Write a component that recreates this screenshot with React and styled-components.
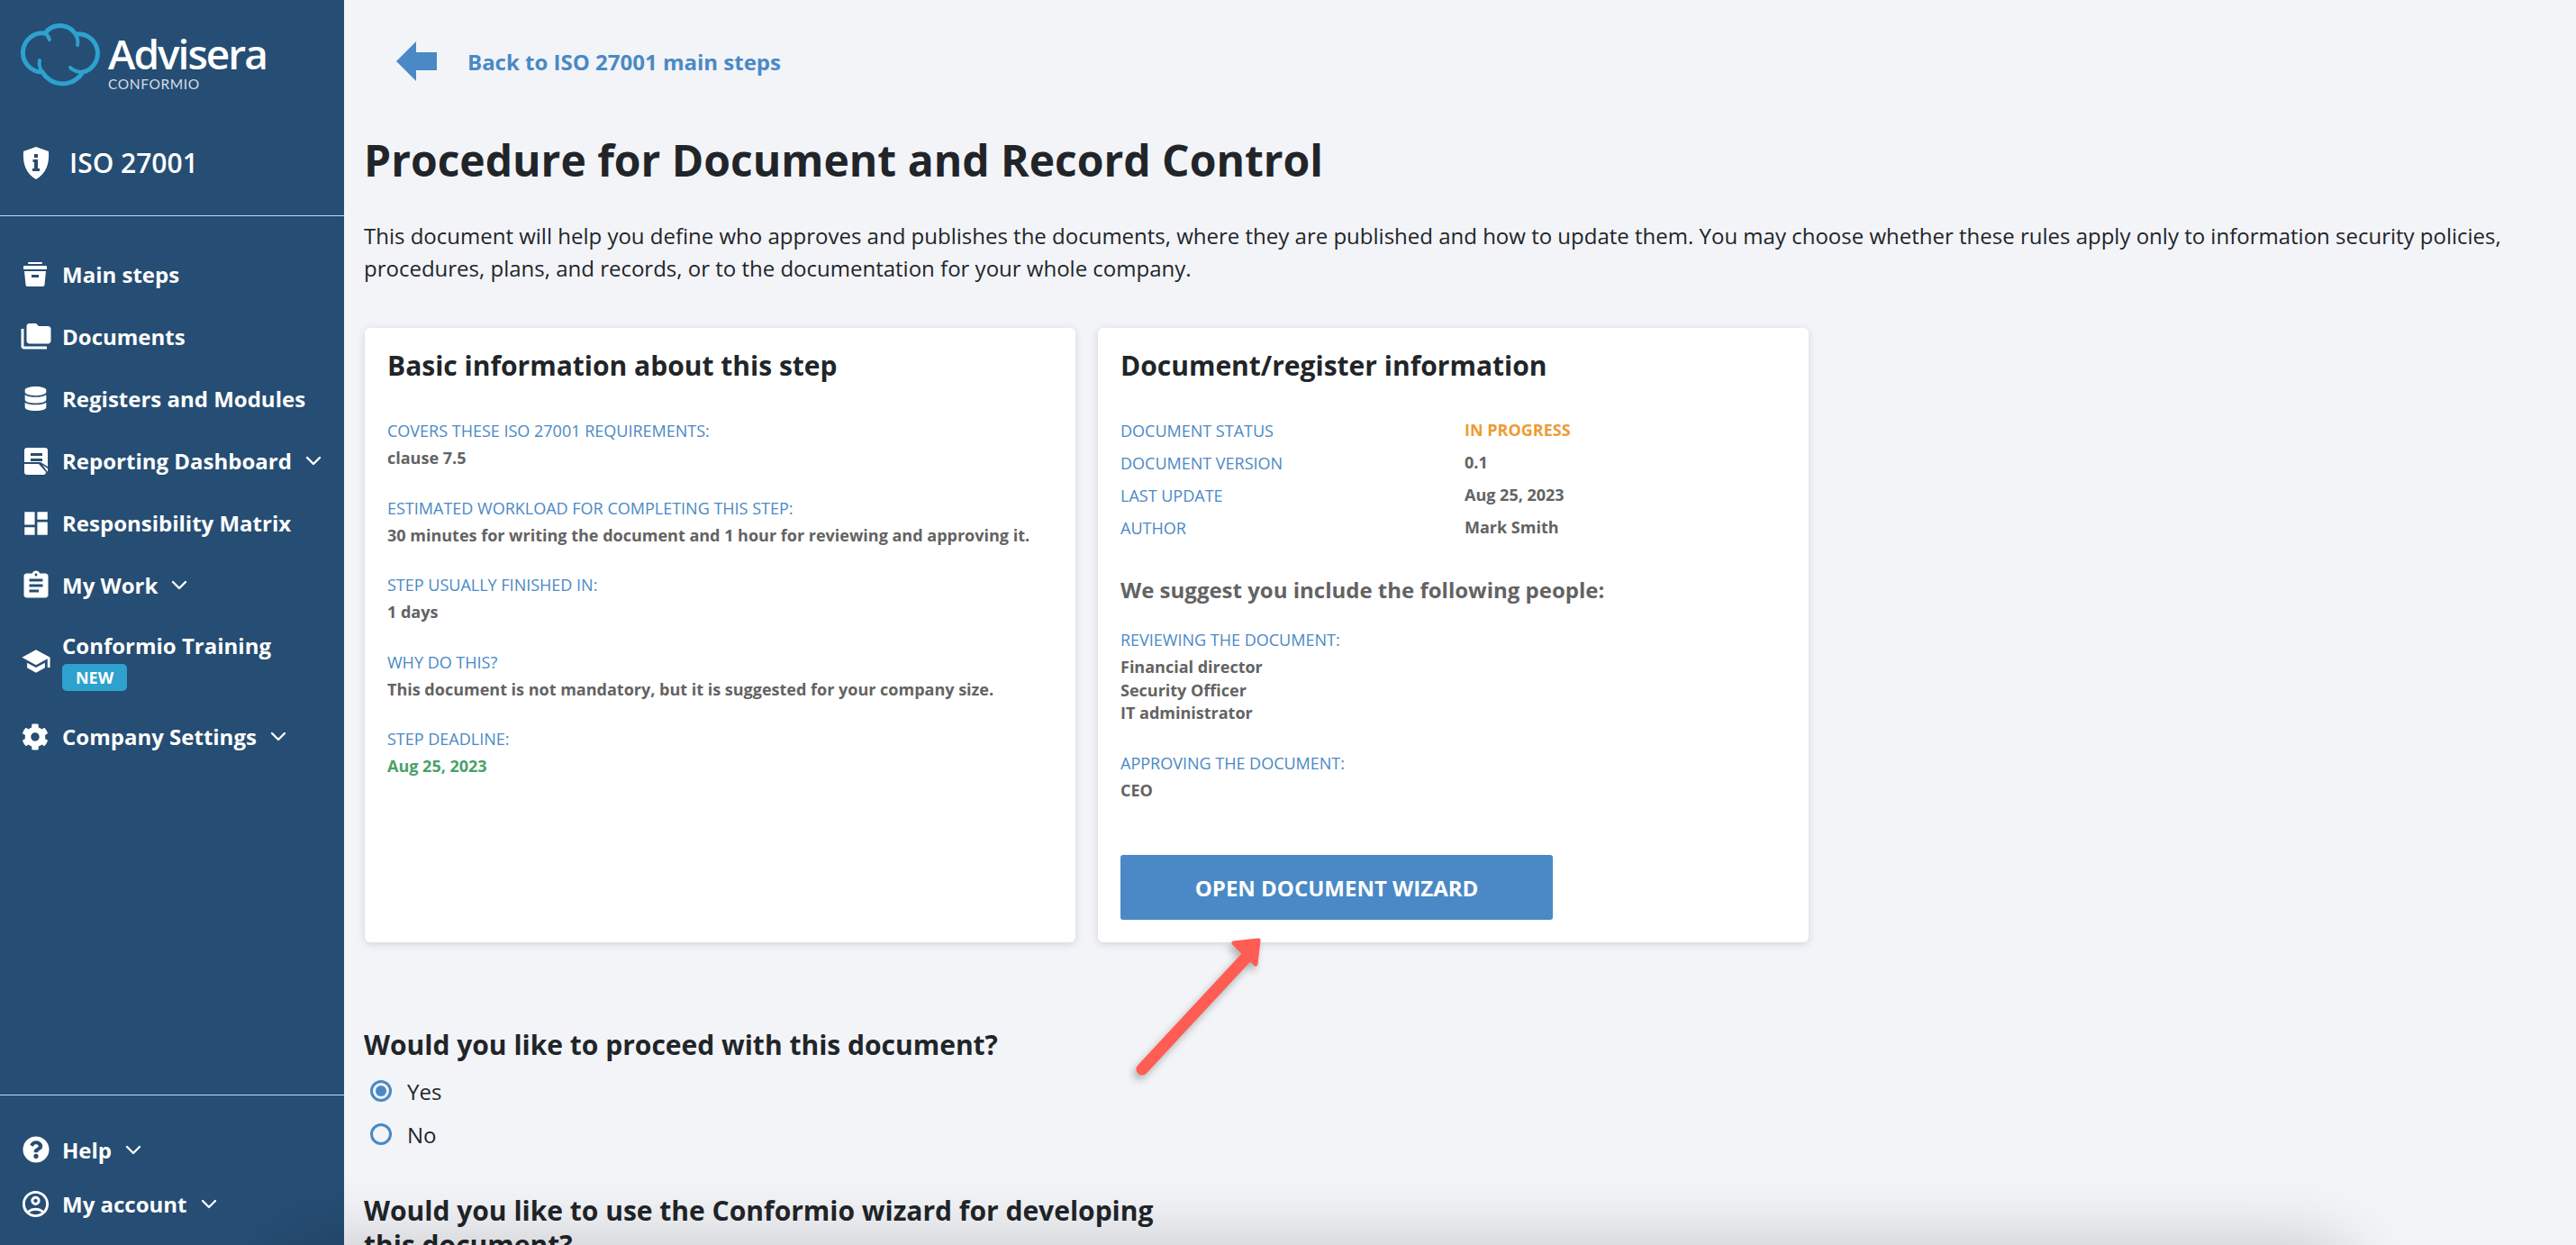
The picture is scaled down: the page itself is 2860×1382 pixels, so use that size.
import React from 'react';
import styled, { createGlobalStyle } from 'styled-components';
import { FaDatabase, FaCog, FaQuestionCircle } from 'react-icons/fa';
import { MdFolderCopy, MdDashboard, MdAssignment, MdSchool, MdOutlineAccountCircle } from 'react-icons/md';

const GlobalStyle = createGlobalStyle`
  html, body { margin: 0; padding: 0; height: 100%; overflow: hidden; }
  body { font-family: "Open Sans", "Liberation Sans", sans-serif; background: #f3f4f8; color: #212529; }
  * { box-sizing: border-box; }
`;

const Page = styled.div`
  display: flex;
  width: 2860px;
  height: 1382px;
  overflow: hidden;
  position: relative;
`;

const Sidebar = styled.aside`
  width: 382px;
  flex: none;
  height: 100%;
  background: #264d73;
  color: #fff;
  display: flex;
  flex-direction: column;
`;

const Logo = styled.div`
  height: 122px;
  padding: 26px 0 0 22px;
  display: flex;
  gap: 8px;
`;

const LogoWords = styled.div`
  display: flex;
  flex-direction: column;
  padding-top: 10px;
`;

const LogoName = styled.div`
  font-size: 46px;
  line-height: 46px;
  font-weight: 600;
  letter-spacing: -2px;
`;

const LogoSub = styled.div`
  font-size: 15.5px;
  line-height: 16px;
  margin-top: 3px;
  letter-spacing: 0.6px;
  color: #d5dde6;
  font-family: "Lato", sans-serif;
`;

const Product = styled.div`
  height: 118px;
  padding-left: 25px;
  border-bottom: 1px solid #b9def7;
  display: flex;
  align-items: center;
  gap: 22px;
  font-size: 30px;
  font-weight: 600;
`;

const Nav = styled.nav`
  flex: 1;
  padding-top: 30px;
  display: flex;
  flex-direction: column;
`;

const NavItem = styled.div`
  height: ${(p) => (p.$tall ? '99px' : '69px')};
  display: flex;
  align-items: center;
  font-size: 24px;
  font-weight: 700;
`;

const IconSlot = styled.span`
  width: 69px;
  padding-left: ${(p) => p.$pad ?? 25}px;
  flex: none;
  display: flex;
  align-items: center;
  svg { display: block; }
`;

const NavStack = styled.div`
  display: flex;
  flex-direction: column;
  align-items: flex-start;
`;

const Badge = styled.span`
  background: #2ea1cf;
  font-size: 18px;
  line-height: 30px;
  width: 72px;
  height: 30px;
  text-align: center;
  border-radius: 5px;
  margin-top: 4px;
`;

const Chevron = styled.svg`
  width: 18px;
  height: 11px;
  margin-left: 15px;
  fill: none;
  stroke: #fff;
  stroke-width: 2.4;
  stroke-linecap: round;
  stroke-linejoin: round;
`;

const SideFoot = styled.div`
  height: 167px;
  border-top: 1px solid #b9def7;
  padding-top: 30px;
  display: flex;
  flex-direction: column;
`;

const FootItem = styled(NavItem)`
  height: 60px;
`;

const Main = styled.main`
  flex: 1;
  position: relative;
  padding: 0 40px 0 22px;
  min-width: 0;
`;

const BackRow = styled.div`
  height: 136px;
  padding-left: 36px;
  display: flex;
  align-items: center;
  gap: 34px;
  color: #4a89c5;
  font-size: 24px;
  font-weight: 700;
`;

const Title = styled.h1`
  margin: 0;
  font-size: 48px;
  line-height: 84px;
  font-weight: 700;
  color: #212529;
`;

const Intro = styled.p`
  margin: 24px 0 0;
  font-size: 24px;
  line-height: 36px;
  font-weight: 400;
`;

const Cards = styled.div`
  display: flex;
  gap: 25px;
  margin-top: 48px;
  padding-left: 1px;
`;

const Card = styled.section`
  width: 789px;
  height: 682px;
  background: #fff;
  border-radius: 6px;
  box-shadow: 0 2px 8px rgba(40, 50, 70, 0.16);
  padding: 24px 25px;
  display: flex;
  flex-direction: column;
`;

const CardTitle = styled.h2`
  margin: 0 0 ${(p) => p.$gap}px;
  font-size: 30px;
  line-height: 36px;
  font-weight: 700;
`;

const Field = styled.div`
  margin-bottom: 29px;
`;

const Label = styled.div`
  font-size: 18px;
  line-height: 27px;
  color: #4a89c5;
  text-transform: uppercase;
`;

const Value = styled.div`
  font-size: 18px;
  line-height: 25.5px;
  margin-top: 4px;
  font-weight: 700;
  color: ${(p) => p.$color || '#636363'};
`;

const MetaRow = styled.div`
  display: flex;
  height: 36px;
  align-items: center;
`;

const MetaLabel = styled(Label)`
  width: 382px;
`;

const MetaValue = styled(Value)`
  margin-top: 0;
`;

const Suggest = styled.h3`
  margin: 32px 0 23px;
  font-size: 24px;
  line-height: 38px;
  font-weight: 700;
  color: #636363;
`;

const WizardButton = styled.button`
  width: 480px;
  height: 72px;
  margin-top: 30px;
  border: none;
  border-radius: 3px;
  background: #4a89c5;
  color: #fff;
  font-family: inherit;
  font-size: 24px;
  font-weight: 700;
`;

const Question = styled.h3`
  margin: ${(p) => p.$top || 0}px 0 0;
  max-width: 900px;
  font-size: 30px;
  line-height: 38px;
  font-weight: 700;
`;

const Radios = styled.div`
  margin-top: 8px;
  margin-bottom: 42px;
`;

const RadioRow = styled.div`
  height: 48px;
  display: flex;
  align-items: center;
  gap: 17px;
  font-size: 24px;
`;

const RadioDot = styled.span`
  width: 24px;
  height: 24px;
  margin-left: 7px;
  border-radius: 50%;
  border: 3px solid #4a89c5;
  display: flex;
  align-items: center;
  justify-content: center;
  &::after {
    content: '';
    width: 12px;
    height: 12px;
    border-radius: 50%;
    background: ${(p) => (p.$on ? '#4a89c5' : 'transparent')};
  }
`;

const Pointer = styled.svg`
  position: absolute;
  left: 860px;
  top: 1030px;
  width: 170px;
  height: 180px;
  filter: drop-shadow(-3px 5px 4px rgba(0, 0, 0, 0.28));
`;

const BottomShade = styled.div`
  position: absolute;
  left: 320px;
  top: 1392px;
  width: 2280px;
  height: 100px;
  border-radius: 30px;
  box-shadow: 0 0 80px 10px rgba(0, 0, 0, 0.2);
  pointer-events: none;
`;

const Down = () => (
  <Chevron viewBox="0 0 18 11"><path d="M2 2l7 7 7-7" /></Chevron>
);

const CloudLogo = () => (
  <svg width="90" height="70" viewBox="0 0 90 70" fill="none" stroke="#2ea1cf" strokeWidth="5" strokeLinecap="round">
    <path d="M28 11A20.500 20.500 0 0 1 62 12A21.400 21.400 0 0 1 70 54A26 26 0 0 1 25 54A21.600 21.600 0 1 1 28 11" />
    <path d="M28 11C31 13 32 15 33 18M62 12C64 16 65 20 64 24M70 54C65 54 60 53 56 49M25 54C22 50 21 46 22 41" strokeWidth="4" />
  </svg>
);

const ShieldIcon = () => (
  <svg width="30" height="36" viewBox="0 0 30 36" fill="#fff">
    <path fillRule="evenodd" d="M15 0l14 5c1 14-3 25-14 31C4 30 0 19 1 5zM13 8h4v4h-4zM11.500 14h5.500v10h2v3h-8v-3h2v-7h-1.500z" />
  </svg>
);

const BoxIcon = () => (
  <svg width="28" height="28" viewBox="0 0 28 28" fill="#fff">
    <path fillRule="evenodd" d="M6 0h14a1 1 0 0 1 0 2H6a1 1 0 0 1 0-2zM1 4h24a1 1 0 0 1 1 1v3H0V5a1 1 0 0 1 1-1zM1 10h24l-1.500 15a2 2 0 0 1-2 2H4.500a2 2 0 0 1-2-2zM9 14v3h8v-3z" transform="translate(1 0)" />
  </svg>
);

const ReportIcon = () => (
  <svg width="26" height="30" viewBox="0 0 26 30" fill="#fff">
    <path fillRule="evenodd" d="M3 0h20a3 3 0 0 1 3 3v18l-8-5H0V3a3 3 0 0 1 3-3zM7 6v3h13V6zM7 12v3h13v-3zM0 18h16l8 9a3 3 0 0 1-2 3H3a3 3 0 0 1-3-3zM20 19l6 4v4z" />
  </svg>
);

const navItems = [
  { label: 'Main steps', icon: <BoxIcon /> },
  { label: 'Documents', icon: <MdFolderCopy size={36} />, pad: 22 },
  { label: 'Registers and Modules', icon: <FaDatabase size={27} />, pad: 26 },
  { label: 'Reporting Dashboard', icon: <ReportIcon />, more: true, pad: 27 },
  { label: 'Responsibility Matrix', icon: <MdDashboard size={34} />, pad: 23 },
  { label: 'My Work', icon: <MdAssignment size={36} />, more: true, pad: 22 },
];

const basicInfo = [
  ['Covers these ISO 27001 requirements:', 'clause 7.5'],
  ['Estimated workload for completing this step:', '30 minutes for writing the document and 1 hour for reviewing and approving it.'],
  ['Step usually finished in:', '1 days'],
  ['Why do this?', 'This document is not mandatory, but it is suggested for your company size.'],
  ['Step deadline:', 'Aug 25, 2023', '#4aa06a'],
];

const docMeta = [
  ['Document status', 'IN PROGRESS', '#ee9b33'],
  ['Document version', '0.1'],
  ['Last update', 'Aug 25, 2023'],
  ['Author', 'Mark Smith'],
];

export default function App() {
  return (
    <Page>
      <GlobalStyle />
      <Sidebar>
        <Logo>
          <CloudLogo />
          <LogoWords>
            <LogoName>Advisera</LogoName>
            <LogoSub>CONFORMIO</LogoSub>
          </LogoWords>
        </Logo>
        <Product><ShieldIcon />ISO 27001</Product>
        <Nav>
          {navItems.map((item) => (
            <NavItem key={item.label}>
              <IconSlot $pad={item.pad}>{item.icon}</IconSlot>
              {item.label}
              {item.more && <Down />}
            </NavItem>
          ))}
          <NavItem $tall>
            <IconSlot $pad={23}><MdSchool size={34} /></IconSlot>
            <NavStack>
              Conformio Training
              <Badge>NEW</Badge>
            </NavStack>
          </NavItem>
          <NavItem>
            <IconSlot $pad={24}><FaCog size={30} /></IconSlot>
            Company Settings
            <Down />
          </NavItem>
        </Nav>
        <SideFoot>
          <FootItem>
            <IconSlot $pad={25}><FaQuestionCircle size={30} /></IconSlot>
            Help
            <Down />
          </FootItem>
          <FootItem>
            <IconSlot $pad={22}><MdOutlineAccountCircle size={35} /></IconSlot>
            My account
            <Down />
          </FootItem>
        </SideFoot>
      </Sidebar>
      <Main>
        <BackRow>
          <svg width="45" height="44" viewBox="0 0 45 44" fill="#4a89c5"><path d="M22 0v12h23v20H22v12L0 22z" /></svg>
          Back to ISO 27001 main steps
        </BackRow>
        <Title>Procedure for Document and Record Control</Title>
        <Intro>
          This document will help you define who approves and publishes the documents, where they are published and how to update them. You may choose whether these rules apply only to information security policies, procedures, plans, and records, or to the documentation for your whole company.
        </Intro>
        <Cards>
          <Card>
            <CardTitle $gap={41}>Basic information about this step</CardTitle>
            {basicInfo.map(([label, value, color]) => (
              <Field key={label}>
                <Label>{label}</Label>
                <Value $color={color}>{value}</Value>
              </Field>
            ))}
          </Card>
          <Card>
            <CardTitle $gap={36}>Document/register information</CardTitle>
            {docMeta.map(([label, value, color]) => (
              <MetaRow key={label}>
                <MetaLabel>{label}</MetaLabel>
                <MetaValue $color={color}>{value}</MetaValue>
              </MetaRow>
            ))}
            <Suggest>We suggest you include the following people:</Suggest>
            <Field>
              <Label>Reviewing the document:</Label>
              <Value>Financial director<br />Security Officer<br />IT administrator</Value>
            </Field>
            <Field>
              <Label>Approving the document:</Label>
              <Value>CEO</Value>
            </Field>
            <WizardButton>OPEN DOCUMENT WIZARD</WizardButton>
          </Card>
        </Cards>
        <Question $top={95}>Would you like to proceed with this document?</Question>
        <Radios>
          <RadioRow><RadioDot $on />Yes</RadioRow>
          <RadioRow><RadioDot />No</RadioRow>
        </Radios>
        <Question>Would you like to use the Conformio wizard for developing this document?</Question>
        <Pointer viewBox="0 0 170 180" fill="none" stroke="#ff5c54" strokeLinecap="round" strokeLinejoin="round">
          <path d="M26 157L146 28" strokeWidth="13" />
          <path d="M155 14L128 17L152 40z" fill="#ff5c54" strokeWidth="5" />
        </Pointer>
      </Main>
      <BottomShade />
    </Page>
  );
}
